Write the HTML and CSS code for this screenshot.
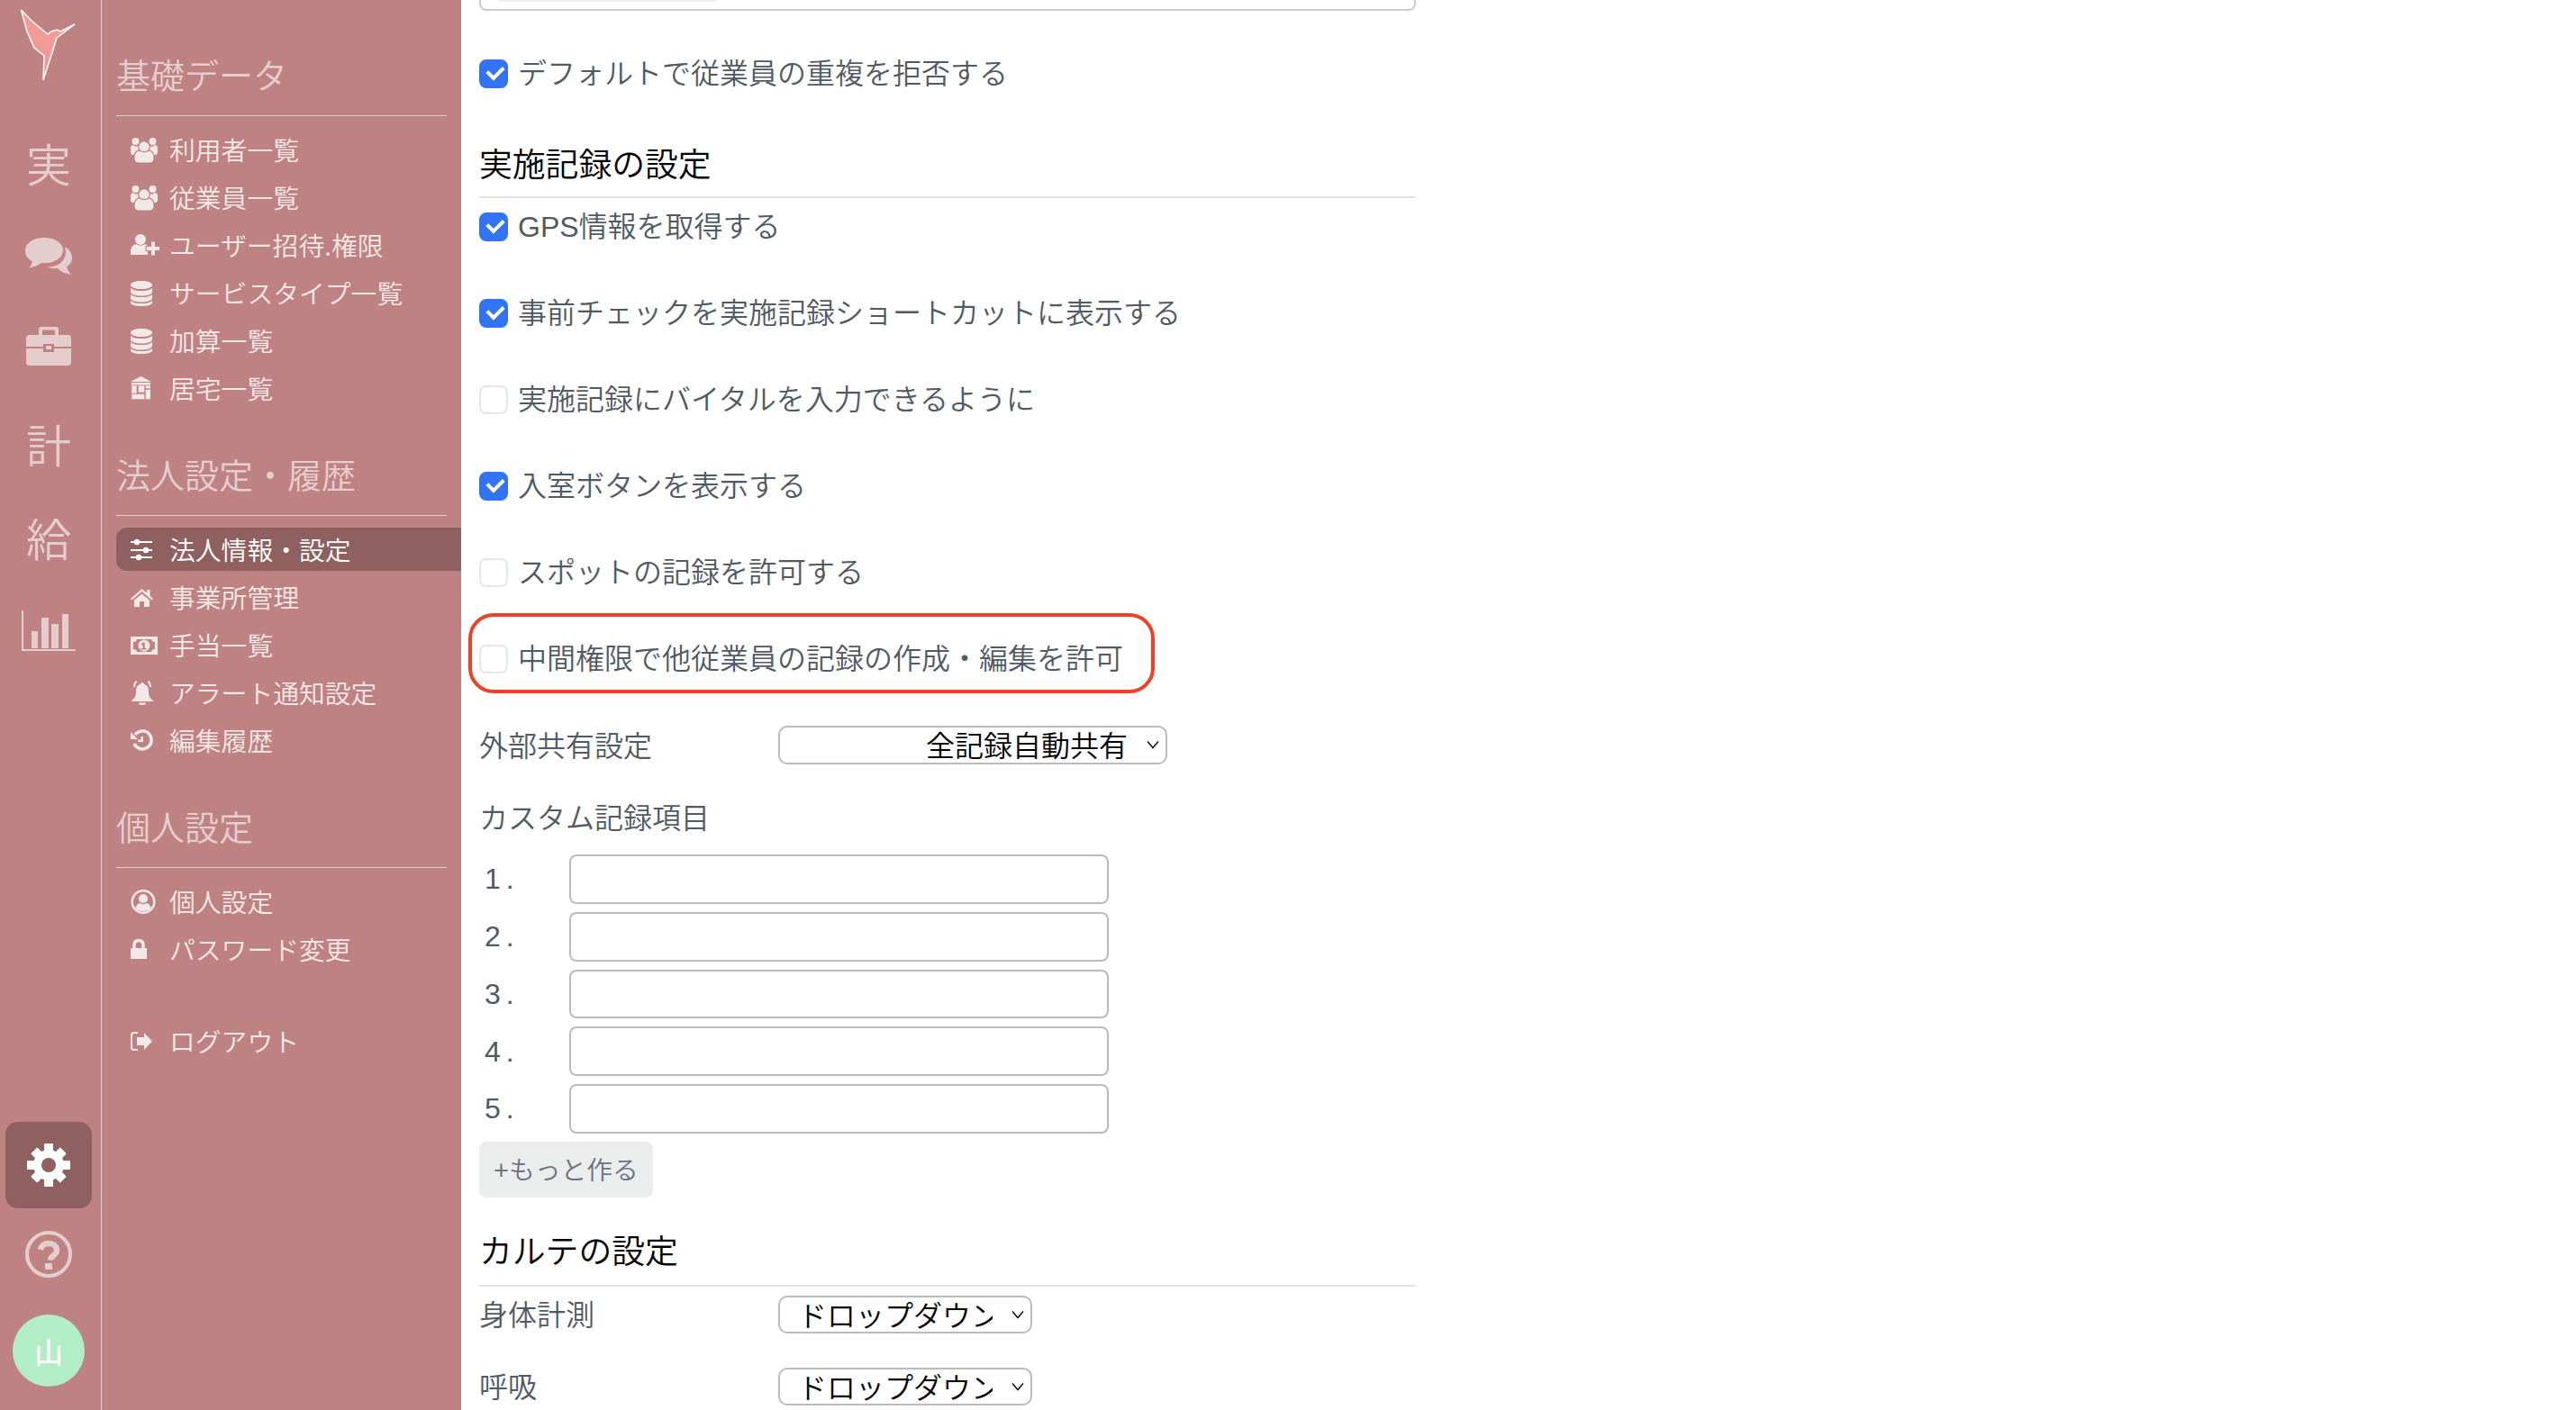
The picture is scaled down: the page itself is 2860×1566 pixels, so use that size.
FILE: index.html
```html
<!DOCTYPE html>
<html lang="ja">
<head>
<meta charset="utf-8">
<title>法人情報・設定</title>
<link rel="stylesheet" href="styles.css">
</head>
<body>
<div class="app">
  <nav class="rail">
    <div class="rail-logo">
      <svg width="100" height="100" viewBox="0 0 100 100"><path class="logo-shape" d="M23.500 11 35 23 53 38 57 35 63 33 67 35 83 27 63 42 58 58 48 89 49 62 38 53 30 35Z"/></svg>
    </div>
    <div class="rail-item rail-char">実</div>
    <div class="rail-item">
      <svg width="52" height="42" viewBox="0 0 52 42"><path class="rail-fill" d="M21 0C9 0 0 6 0 14.500c0 5 3 9 8 12-1 3-2 5-4 7 5-.5 10-2.500 14-5.500 1 .2 2 .2 3 .2 12 0 21-6 21-14.200S33 0 21 0Z"/><path class="rail-fill" d="M44 10c5 3 8 7 8 12 0 4-2 8-6 10 1 3 2 6 5 9-6-1-11-3-15-7-4 .4-8 0-12-1.500C38 33 48 24 44 10Z"/></svg>
    </div>
    <div class="rail-item rail-item-raised">
      <svg width="50" height="43" viewBox="0 0 50 43"><path class="rail-fill" fill-rule="evenodd" d="M17 0h16a3 3 0 0 1 3 3v6h10a4 4 0 0 1 4 4v9H31v-3H19v3H0v-9a4 4 0 0 1 4-4h10V3a3 3 0 0 1 3-3Zm1 3.500V9h14V3.500ZM0 24h19v4h12v-4h19v15a4 4 0 0 1-4 4H4a4 4 0 0 1-4-4ZM22 21h6v4h-6Z"/></svg>
    </div>
    <div class="rail-item rail-char">計</div>
    <div class="rail-item rail-char">給</div>
    <div class="rail-item">
      <svg width="60" height="46" viewBox="0 0 60 46"><path class="rail-fill" d="M0 0h2v43h58v2H0ZM11 23h7v19h-7ZM22 8h8v34h-8ZM33 15h8v27h-8ZM45 4h7v38h-7Z"/></svg>
    </div>
    <div class="rail-bottom">
      <div class="rail-gear">
        <svg width="48" height="48" viewBox="0 0 48 48">
          <g class="gear-shape">
            <rect x="19" y="0" width="10" height="48" rx="1"/>
            <rect x="19" y="1" width="10" height="46" rx="1" transform="rotate(45 24 24)"/>
            <rect x="19" y="0" width="10" height="48" rx="1" transform="rotate(90 24 24)"/>
            <rect x="19" y="1" width="10" height="46" rx="1" transform="rotate(135 24 24)"/>
            <circle cx="24" cy="24" r="17"/>
          </g>
          <circle class="gear-hole" cx="24" cy="24" r="8"/>
        </svg>
      </div>
      <div class="rail-help">
        <svg width="52" height="52" viewBox="0 0 52 52"><circle class="help-ring" cx="26" cy="26" r="24"/><path class="help-mark" d="M17 21c1-5 5-7 9-7 5 0 9 3 9 7.500 0 6-7 6-7 11"/><rect class="rail-fill" x="22" y="36" width="8" height="7"/></svg>
      </div>
      <div class="rail-avatar">山</div>
    </div>
  </nav>

  <aside class="panel">
    <section class="panel-section">
      <h3 class="panel-title">基礎データ</h3>
      <ul class="panel-list">
        <li class="panel-row"><a class="panel-link">
          <svg class="icon" viewBox="0 0 32 32"><use href="#i-users"/></svg>利用者一覧</a></li>
        <li class="panel-row"><a class="panel-link">
          <svg class="icon" viewBox="0 0 32 32"><use href="#i-users"/></svg>従業員一覧</a></li>
        <li class="panel-row"><a class="panel-link">
          <svg class="icon" viewBox="0 0 32 32"><path d="M11 4a6 6 0 1 1 0 12 6 6 0 0 1 0-12ZM0 27v-4c0-4 2-7 6-8 3 2 7 2 10 0l3 2v10Z"/><path class="icon-cut" d="M22.500 12h5v5.500H33v5h-5.500V28h-5v-5.500H17v-5h5.500Z"/></svg>ユーザー招待.権限</a></li>
        <li class="panel-row"><a class="panel-link">
          <svg class="icon" viewBox="0 0 32 32"><use href="#i-db"/></svg>サービスタイプ一覧</a></li>
        <li class="panel-row"><a class="panel-link">
          <svg class="icon" viewBox="0 0 32 32"><use href="#i-db"/></svg>加算一覧</a></li>
        <li class="panel-row"><a class="panel-link">
          <svg class="icon" viewBox="0 0 32 32"><path d="M11.500 3 23 9H0Z"/><rect x="1" y="10" width="21" height="2.500"/><rect x="1.300" y="13.300" width="5.400" height="8.400"/><rect x="8.700" y="13.300" width="6.600" height="7.400"/><rect x="16.700" y="13.300" width="5.300" height="3"/><rect x="16.700" y="17.700" width="5.300" height="10.600"/><rect x="1.300" y="22.700" width="14" height="5.600"/></svg>居宅一覧</a></li>
      </ul>
    </section>

    <section class="panel-section">
      <h3 class="panel-title">法人設定・履歴</h3>
      <ul class="panel-list">
        <li class="panel-row"><a class="panel-link panel-link-active">
          <svg class="icon" viewBox="0 0 32 32"><path d="M0 7h24v2H0ZM0 16h24v2H0ZM0 24h24v2H0Z"/><circle cx="7" cy="8" r="3.200"/><circle cx="17" cy="17" r="3.200"/><circle cx="9" cy="25" r="3.200"/></svg>法人情報・設定</a></li>
        <li class="panel-row"><a class="panel-link">
          <svg class="icon" viewBox="0 0 32 32"><path d="M12.500 7 18 11.500V8h3.500v6.500L25 18l-1.300 1.500L12.500 10 1.300 19.500 0 18ZM12.500 12.500 21 19.500V27h-6v-6h-5v6H4v-7.500Z"/></svg>事業所管理</a></li>
        <li class="panel-row"><a class="panel-link">
          <svg class="icon" viewBox="0 0 32 32"><path fill-rule="evenodd" d="M0 7h30v20H0Zm7 3c0 2-2 3-4 3v8c2 0 4 1 4 3h16c0-2 2-3 4-3v-8c-2 0-4-1-4-3Z"/><path fill-rule="evenodd" d="M15 10.500a6.500 6.500 0 1 1 0 13 6.500 6.500 0 0 1 0-13Zm-1 3-2.500 2 1 1.300 1-.8V20h-2v1.500h6V20h-1.800v-6.500Z"/></svg>手当一覧</a></li>
        <li class="panel-row"><a class="panel-link">
          <svg class="icon" viewBox="0 0 32 32"><path d="M13 5c1 0 2 1 2 2 4 1 5 4 5 8 0 6 2 8 6 11H0c4-3 6-5 6-11 0-4 1-7 5-8 0-1 1-2 2-2ZM9 27.500h8c0 2-2 2.500-4 2.500s-4-.5-4-2.500Z"/><path class="icon-line" d="M4 10c0-2 1-5 2.500-6.500M22 10c0-2-1-5-2.500-6.500"/></svg>アラート通知設定</a></li>
        <li class="panel-row"><a class="panel-link">
          <svg class="icon" viewBox="0 0 32 32"><path class="icon-thick" d="M5 10a10 10 0 1 1-1 10"/><path d="M0 7v8h8ZM11.500 12h2.500v6h-6v-2.500h3.500Z"/></svg>編集履歴</a></li>
      </ul>
    </section>

    <section class="panel-section">
      <h3 class="panel-title">個人設定</h3>
      <ul class="panel-list">
        <li class="panel-row"><a class="panel-link">
          <svg class="icon" viewBox="0 0 32 32"><circle class="icon-ring" cx="14" cy="16.500" r="12.300"/><circle cx="14" cy="13" r="5"/><path d="M5.500 24c.5-4 3-5.500 4.500-6 2.500 1.500 5.500 1.500 8 0 1.500.5 4 2 4.500 6-4 4-13 4-17 0Z"/></svg>個人設定</a></li>
        <li class="panel-row"><a class="panel-link">
          <svg class="icon" viewBox="0 0 32 32"><path d="M0 15h18v12H0Z"/><path class="icon-thick" d="M4 15v-3c0-3.500 2-5.500 5-5.500s5 2 5 5.500v3"/></svg>パスワード変更</a></li>
      </ul>
    </section>

    <ul class="panel-list panel-logout">
      <li class="panel-row"><a class="panel-link">
        <svg class="icon" viewBox="0 0 32 32"><path class="icon-line" d="M8 7H4a3 3 0 0 0-3 3v13a3 3 0 0 0 3 3h4"/><path d="M15 7l9 9.500L15 26v-5H7v-9h8Z"/></svg>ログアウト</a></li>
    </ul>
  </aside>

  <main class="content">
    <div class="clip-box"><div class="clip-tab"></div></div>

    <div class="checks checks-first">
      <label class="check"><input type="checkbox" checked><span class="check-text">デフォルトで従業員の重複を拒否する</span></label>
    </div>

    <h2 class="section-title">実施記録の設定</h2>
    <div class="checks">
      <label class="check"><input type="checkbox" checked><span class="check-text">GPS情報を取得する</span></label>
      <label class="check"><input type="checkbox" checked><span class="check-text">事前チェックを実施記録ショートカットに表示する</span></label>
      <label class="check"><input type="checkbox"><span class="check-text">実施記録にバイタルを入力できるように</span></label>
      <label class="check"><input type="checkbox" checked><span class="check-text">入室ボタンを表示する</span></label>
      <label class="check"><input type="checkbox"><span class="check-text">スポットの記録を許可する</span></label>
      <label class="check check-flagged"><input type="checkbox"><span class="check-text">中間権限で他従業員の記録の作成・編集を許可</span></label>
    </div>

    <div class="field field-share">
      <span class="field-label">外部共有設定</span>
      <div class="select select-wide">
        <select><option>全記録自動共有</option></select>
        <svg class="chevron" width="16" height="10" viewBox="0 0 16 10"><path d="M2 1.500 8 8.500 14 1.500"/></svg>
      </div>
    </div>

    <div class="custom-title">カスタム記録項目</div>
    <ol class="custom-list">
      <li class="custom-row"><span class="custom-num">1.</span><input class="custom-input" type="text"></li>
      <li class="custom-row"><span class="custom-num">2.</span><input class="custom-input" type="text"></li>
      <li class="custom-row"><span class="custom-num">3.</span><input class="custom-input" type="text"></li>
      <li class="custom-row"><span class="custom-num">4.</span><input class="custom-input" type="text"></li>
      <li class="custom-row"><span class="custom-num">5.</span><input class="custom-input" type="text"></li>
    </ol>
    <button class="more-btn" type="button">+もっと作る</button>

    <h2 class="section-title section-title-chart">カルテの設定</h2>
    <div class="field field-chart">
      <span class="field-label">身体計測</span>
      <div class="select select-narrow">
        <select><option>ドロップダウン</option></select>
        <svg class="chevron" width="16" height="10" viewBox="0 0 16 10"><path d="M2 1.500 8 8.500 14 1.500"/></svg>
      </div>
    </div>
    <div class="field field-chart">
      <span class="field-label">呼吸</span>
      <div class="select select-narrow">
        <select><option>ドロップダウン</option></select>
        <svg class="chevron" width="16" height="10" viewBox="0 0 16 10"><path d="M2 1.500 8 8.500 14 1.500"/></svg>
      </div>
    </div>
  </main>
</div>

<svg class="sprites" width="0" height="0">
  <defs>
    <g id="i-users">
      <circle cx="5.500" cy="7" r="4"/><circle cx="24.500" cy="7" r="4"/>
      <path d="M0 14c0-2 2-3 3-3 2 2 5 2 7 0l2 4-5 4v3H3c-2 0-3-1-3-3ZM30 14c0-2-2-3-3-3-2 2-5 2-7 0l-2 4 5 4v3h4c2 0 3-1 3-3Z"/>
      <circle class="icon-cut" cx="15" cy="13" r="6.300"/>
      <path class="icon-cut" d="M4 24c0-4 3-7 6-7 3 2 7 2 10 0 3 0 6 3 6 7v3c0 2-2 4-4 4H8c-2 0-4-2-4-4Z"/>
    </g>
    <g id="i-db">
      <path d="M12 3c7 0 12 2 12 4.500S19 12 12 12 0 10 0 7.500 5 3 12 3ZM0 11c3 2.500 7 3 12 3s9-.5 12-3v4c0 2.500-5 4.500-12 4.500S0 17.500 0 15ZM0 18c3 2.500 7 3 12 3s9-.5 12-3v4c0 2.500-5 4.500-12 4.500S0 24.500 0 22ZM0 25c3 2.500 7 3 12 3s9-.5 12-3v2c0 2.500-5 4-12 4S0 29.500 0 27Z"/>
    </g>
  </defs>
</svg>
</body>
</html>
```
FILE: styles.css
```css
* { box-sizing: border-box; }

html, body {
  margin: 0;
  height: 1566px;
  overflow: hidden;
  background: #fff;
  font-family: "Liberation Sans", "Noto Sans CJK JP", sans-serif;
  font-weight: 350;
}

.sprites { position: absolute; }

.app {
  display: flex;
  height: 1566px;
  overflow: hidden;
}

/* rail */
.rail {
  flex: 0 0 113px;
  min-width: 0;
  display: flex;
  flex-direction: column;
  padding-right: 4px;
  background: #be8282;
  border-right: 1px solid #e8d2d2;
}
.rail-logo { height: 129px; }
.logo-shape { fill: #f29a96; stroke: #fff; stroke-width: 1.500; stroke-linejoin: miter; }
.rail-item {
  height: 104px;
  display: flex;
  align-items: center;
  justify-content: center;
}
.rail-item-raised { padding-bottom: 10px; }
.rail-char {
  padding-bottom: 3px;
  font-family: "Noto Sans CJK JP", sans-serif;
  font-size: 50px;
  font-weight: 350;
  color: #e5cdcd;
}
.rail-fill { fill: #e5cdcd; }
.rail-bottom {
  margin-top: auto;
  padding-bottom: 26px;
  display: flex;
  flex-direction: column;
  align-items: center;
}
.rail-gear {
  width: 96px;
  height: 96px;
  border-radius: 14px;
  background: #8f6060;
  display: flex;
  align-items: center;
  justify-content: center;
}
.gear-shape { fill: #fff; }
.gear-hole { fill: #8f6060; }
.rail-help { height: 52px; margin: 25px 0 41px; }
.help-ring { fill: none; stroke: #e5cdcd; stroke-width: 4; }
.help-mark { fill: none; stroke: #e5cdcd; stroke-width: 6.500; }
.rail-avatar {
  width: 80px;
  height: 80px;
  border-radius: 50%;
  background: #b1edc5;
  color: #fff;
  font-family: "Noto Sans CJK JP", sans-serif;
  font-size: 32px;
  font-weight: 500;
  display: flex;
  align-items: center;
  justify-content: center;
}

/* secondary panel */
.panel {
  flex: 0 0 399px;
  padding: 58px 0 0 16px;
  background: #be8282;
}
.panel-section + .panel-section { margin-top: 45px; }
.panel-title {
  margin: 0 16px 0 0;
  height: 71px;
  line-height: 48px;
  border-bottom: 1px solid #e5cdcd;
  font-size: 38px;
  font-weight: 350;
  font-family: "Noto Sans CJK JP", sans-serif;
  color: #e5cdcd;
}
.panel-list {
  list-style: none;
  margin: 10px 0 0;
  padding: 0;
}
.panel-row {
  height: 53px;
  display: flex;
  align-items: center;
}
.panel-link {
  flex: 1;
  height: 48px;
  padding-left: 16px;
  display: flex;
  align-items: center;
  gap: 11px;
  font-size: 28.800px;
  font-weight: 350;
  line-height: 1.300;
  font-family: "Noto Sans CJK JP", sans-serif;
  color: #f3e8e8;
  border-radius: 12px 0 0 12px;
}
.panel-link-active { background: #8f6060; color: #fff; }
.icon { width: 32px; height: 32px; flex: none; fill: currentColor; }
.icon-cut { stroke: #be8282; stroke-width: 1.200; }
.icon-line { fill: none; stroke: currentColor; stroke-width: 2; }
.icon-thick { fill: none; stroke: currentColor; stroke-width: 3.500; }
.icon-ring { fill: none; stroke: currentColor; stroke-width: 2.500; }
.panel-logout { margin-top: 49px; }

/* content */
.content {
  flex: 0 0 1060px;
  padding-left: 20px;
  color: #4f5a66;
  font-size: 32px;
}
.clip-box {
  height: 12px;
  border: 2px solid #ccc;
  border-top: 0;
  border-radius: 0 0 8px 8px;
  padding-left: 20px;
}
.clip-tab {
  width: 241px;
  height: 2px;
  background: #eee;
  border-radius: 0 0 6px 6px;
}
.checks {
  display: flex;
  flex-direction: column;
  gap: 64px;
}
.checks-first { margin-top: 54px; }
.check {
  position: relative;
  height: 32px;
  display: flex;
  align-items: center;
  gap: 11px;
  white-space: nowrap;
}
.check-text { line-height: 40px; }
.check input {
  appearance: none;
  flex: none;
  position: relative;
  width: 32px;
  height: 32px;
  margin: 0;
  border: 2px solid #e2e8f0;
  border-radius: 8px;
  background: #fff;
}
.check input:checked { background: #3273f6; border-color: #3273f6; }
.check input:checked::after {
  content: "";
  position: absolute;
  left: 7px;
  top: 5px;
  width: 14px;
  height: 8px;
  border-left: 4px solid #fff;
  border-bottom: 4px solid #fff;
  transform: rotate(-45deg);
}
.check-flagged::after {
  content: "";
  box-sizing: border-box;
  position: absolute;
  left: -12px;
  top: -35px;
  width: 762px;
  height: 89px;
  border: 4px solid #ee4125;
  border-radius: 28px;
  pointer-events: none;
}
.section-title {
  margin: 58px 0 16px;
  height: 64px;
  line-height: 48px;
  padding-bottom: 12px;
  border-bottom: 2px solid #e2e2e2;
  font-size: 36.800px;
  font-weight: 350;
  font-family: "Noto Sans CJK JP", sans-serif;
  color: #000;
}
.section-title-chart { margin: 33px 0 10px; height: 66px; }
.field { display: flex; align-items: center; height: 43px; }
.field-label { width: 332px; line-height: 40px; padding-top: 3px; }
.field-share { margin-top: 58px; }
.field-chart { height: 42px; }
.field-chart + .field-chart { margin-top: 38px; }
.select { position: relative; height: 43px; }
.select select {
  appearance: none;
  width: 100%;
  height: 100%;
  padding: 2px 42px 0 20px;
  border: 2px solid #bbb;
  border-radius: 10px;
  background: #fff;
  color: #000;
  font: inherit;
  line-height: 38px;
}
.select-wide { width: 432px; }
.select-wide select { text-align: right; }
.select-narrow { width: 282px; height: 42px; }
.chevron {
  position: absolute;
  right: 8px;
  top: 16px;
  fill: none;
  stroke: #111;
  stroke-width: 1.500;
  pointer-events: none;
}
.custom-title { margin-top: 37px; height: 44px; line-height: 46px; }
.custom-list {
  list-style: none;
  margin: 19px 0 0;
  padding: 0;
  display: flex;
  flex-direction: column;
  gap: 9px;
}
.custom-row { display: flex; align-items: center; height: 54.750px; }
.custom-num { width: 100px; padding-left: 6px; letter-spacing: 6px; line-height: 40px; }
.custom-input {
  width: 599px;
  height: 100%;
  border: 2px solid #bbb;
  border-radius: 8px;
  background: #fff;
}
.more-btn {
  display: block;
  margin-top: 9px;
  width: 193px;
  height: 62px;
  padding: 0 0 3px;
  border: 0;
  border-radius: 8px;
  background: #ebeded;
  color: #6b7280;
  font-family: inherit;
  font-weight: 350;
  font-size: 28.800px;
}
```
